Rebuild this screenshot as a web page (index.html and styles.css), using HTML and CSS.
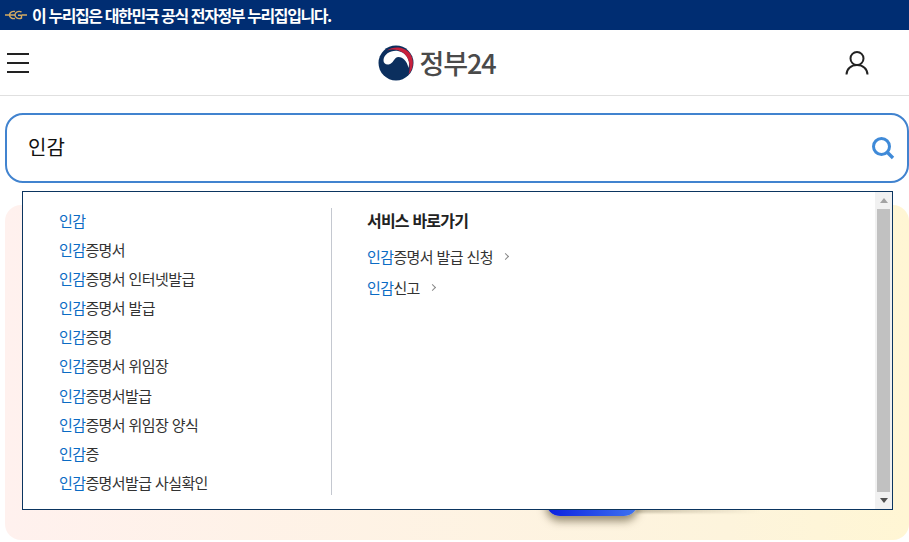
FILE: index.html
```html
<!DOCTYPE html>
<html lang="ko">
<head>
  <meta charset="UTF-8">
  <title>정부24</title>
  <link rel="stylesheet" href="styles.css">
</head>
<body>

  <div class="gov-banner">
    <svg class="eg-mark" width="22" height="10" viewBox="0 0 22 10">
      <path d="M0 5H4M17 5H22" stroke="#d4ab62" stroke-width="1.300"/>
      <path d="M10 1.500C7 .8 4.500 2.500 4.500 5S7 9.200 10 8.500M4.500 5H10" fill="none" stroke="#d4ab62" stroke-width="1.400"/>
      <path d="M16.500 2C13.500 .5 10 2 10 5S13.500 9.500 16.500 8V5.200H13" fill="none" stroke="#d4ab62" stroke-width="1.400"/>
    </svg>
    <span>이 누리집은 대한민국 공식 전자정부 누리집입니다.</span>
  </div>

  <header class="top-bar">
    <div class="menu-btn"><span></span><span></span><span></span></div>
    <div class="logo">
      <svg width="36" height="36" viewBox="0 0 36 36">
        <circle cx="18" cy="18" r="17.500" fill="#0b2f5e"/>
        <path d="M5.500 15C6 9 13 5 20 6C27 7 33 14 30.500 23C29 16 25 12 20.500 12C16 12 15.500 19 10.500 19.500C7.500 19.800 5.300 18 5.500 15Z" fill="#fff"/>
        <path d="M9 5.500C15 1 26 1 32 8.500C36.500 15 35.500 24 30.500 29.500C33 22 31.500 13 25.500 8C20.500 4.500 14 3.800 9 5.500Z" fill="#c8213c"/>
      </svg>
      <span class="logo-text">정부24</span>
    </div>
    <svg class="user-btn" width="24" height="26" viewBox="0 0 24 26">
      <circle cx="12" cy="8.500" r="6.500" fill="none" stroke="#222" stroke-width="2"/>
      <path d="M1.500 24.500C1.500 19 6 15 12 15S22.500 19 22.500 24.500" fill="none" stroke="#222" stroke-width="2"/>
    </svg>
  </header>

  <main class="content">
    <div class="search-box">
      <span class="search-value">인감</span>
      <svg width="24" height="24" viewBox="0 0 24 24">
        <circle cx="10.500" cy="10.500" r="8" fill="none" stroke="#3f8ad8" stroke-width="3"/>
        <path d="M16.500 16.500L22 22" stroke="#3f8ad8" stroke-width="3.400"/>
      </svg>
    </div>
    <div class="hero-card"></div>

    <div class="suggest">
      <ul class="word-list">
        <li><b>인감</b></li>
        <li><b>인감</b>증명서</li>
        <li><b>인감</b>증명서 인터넷발급</li>
        <li><b>인감</b>증명서 발급</li>
        <li><b>인감</b>증명</li>
        <li><b>인감</b>증명서 위임장</li>
        <li><b>인감</b>증명서발급</li>
        <li><b>인감</b>증명서 위임장 양식</li>
        <li><b>인감</b>증</li>
        <li><b>인감</b>증명서발급 사실확인</li>
      </ul>
      <div class="shortcut">
        <h3>서비스 바로가기</h3>
        <a><b>인감</b>증명서 발급 신청<i></i></a>
        <a><b>인감</b>신고<i></i></a>
      </div>
      <div class="scroll">
        <div class="arrow-up"></div>
        <div class="thumb"></div>
        <div class="arrow-down"></div>
      </div>
    </div>
  </main>

</body>
</html>
```

FILE: styles.css
```css
* {
  box-sizing: border-box;
}

body {
  margin: 0;
  height: 542px;
  overflow: hidden;
  background-color: #ffffff;
  font-family: "Noto Sans CJK KR", "Noto Sans", sans-serif;
  color: #333;
}

.gov-banner {
  display: flex;
  align-items: center;
  gap: 5px;
  height: 30px;
  padding-left: 5px;
  background-color: #002d72;
  color: #ffffff;
  font-size: 16px;
  font-weight: 700;
  letter-spacing: -1.4px;
}

.top-bar {
  display: flex;
  justify-content: space-between;
  align-items: center;
  height: 66px;
  padding: 0 40px 0 7px;
  border-bottom: 1px solid #e0e0e0;
}

.menu-btn {
  display: flex;
  flex-direction: column;
  gap: 7px;
  width: 22px;
}

.menu-btn span {
  height: 2px;
  background-color: #222;
}

.logo {
  display: flex;
  align-items: center;
  gap: 5px;
}

.logo-text {
  font-size: 27px;
  font-weight: 500;
  letter-spacing: -1.1px;
  color: #4a4a4a;
}

.content {
  position: relative;
  padding: 17px 0 0 5px;
}

.search-box {
  display: flex;
  justify-content: space-between;
  align-items: center;
  height: 70px;
  padding: 0 12px 0 21px;
  border: 2px solid #4183cf;
  border-radius: 18px;
  background-color: #ffffff;
}

.search-value {
  margin-top: -3px;
  font-size: 20px;
  color: #111;
}

.hero-card {
  height: 335px;
  margin-top: 22px;
  border-radius: 16px;
  background: linear-gradient(90deg, #fff1ee, #fdf4dc 80%, #fff6d4);
}

/* blue app tile that peeks out under the dropdown */
.hero-card::after {
  content: "";
  position: absolute;
  left: 546px;
  top: 392px;
  width: 92px;
  height: 28px;
  border-radius: 0 0 14px 14px;
  background: linear-gradient(90deg, #0a1fe0, #3f74f0);
  box-shadow: 0 5px 8px rgba(60, 50, 20, 0.55);
}

.hero-card::before {
  content: "";
  position: absolute;
  left: 636px;
  top: 412px;
  width: 125px;
  height: 5px;
  background: linear-gradient(90deg, rgba(90, 80, 50, 0.3), rgba(90, 80, 50, 0));
  filter: blur(1px);
}

.suggest {
  position: absolute;
  left: 22px;
  top: 95px;
  display: flex;
  width: 871px;
  height: 319px;
  padding-top: 16px;
  border: 1px solid #0b3560;
  background-color: #ffffff;
  z-index: 2;
  font-size: 15px;
  letter-spacing: -0.6px;
}

.suggest b {
  font-weight: 400;
  color: #0b6bc4;
}

.word-list {
  width: 309px;
  height: 287px;
  margin: 0;
  padding: 0 0 0 36px;
  list-style: none;
  border-right: 1px solid #c4c8d0;
}

.word-list li {
  height: 29.100px;
  line-height: 25px;
  white-space: nowrap;
}

.shortcut {
  flex: 1;
  padding-left: 35px;
}

.shortcut h3 {
  margin: 0 0 8px;
  font-size: 16px;
  font-weight: 700;
  line-height: 25px;
  letter-spacing: -0.8px;
  color: #222;
}

.shortcut a {
  display: flex;
  align-items: center;
  height: 31px;
  line-height: 26px;
}

.shortcut i {
  width: 5px;
  height: 5px;
  margin-left: 10px;
  border-top: 1.500px solid #888;
  border-right: 1.500px solid #888;
  transform: rotate(45deg);
}

.scroll {
  display: flex;
  flex-direction: column;
  align-items: center;
  width: 17px;
  margin-top: -16px;
  background-color: #f1f1f1;
}

.arrow-up,
.arrow-down {
  width: 0;
  height: 0;
  margin: 6px 0;
  border-left: 4px solid transparent;
  border-right: 4px solid transparent;
}

.arrow-up {
  border-bottom: 5px solid #a3a3a3;
}

.arrow-down {
  border-top: 5px solid #505050;
}

.thumb {
  flex: 1;
  width: 13px;
  background-color: #c1c1c1;
}
```
